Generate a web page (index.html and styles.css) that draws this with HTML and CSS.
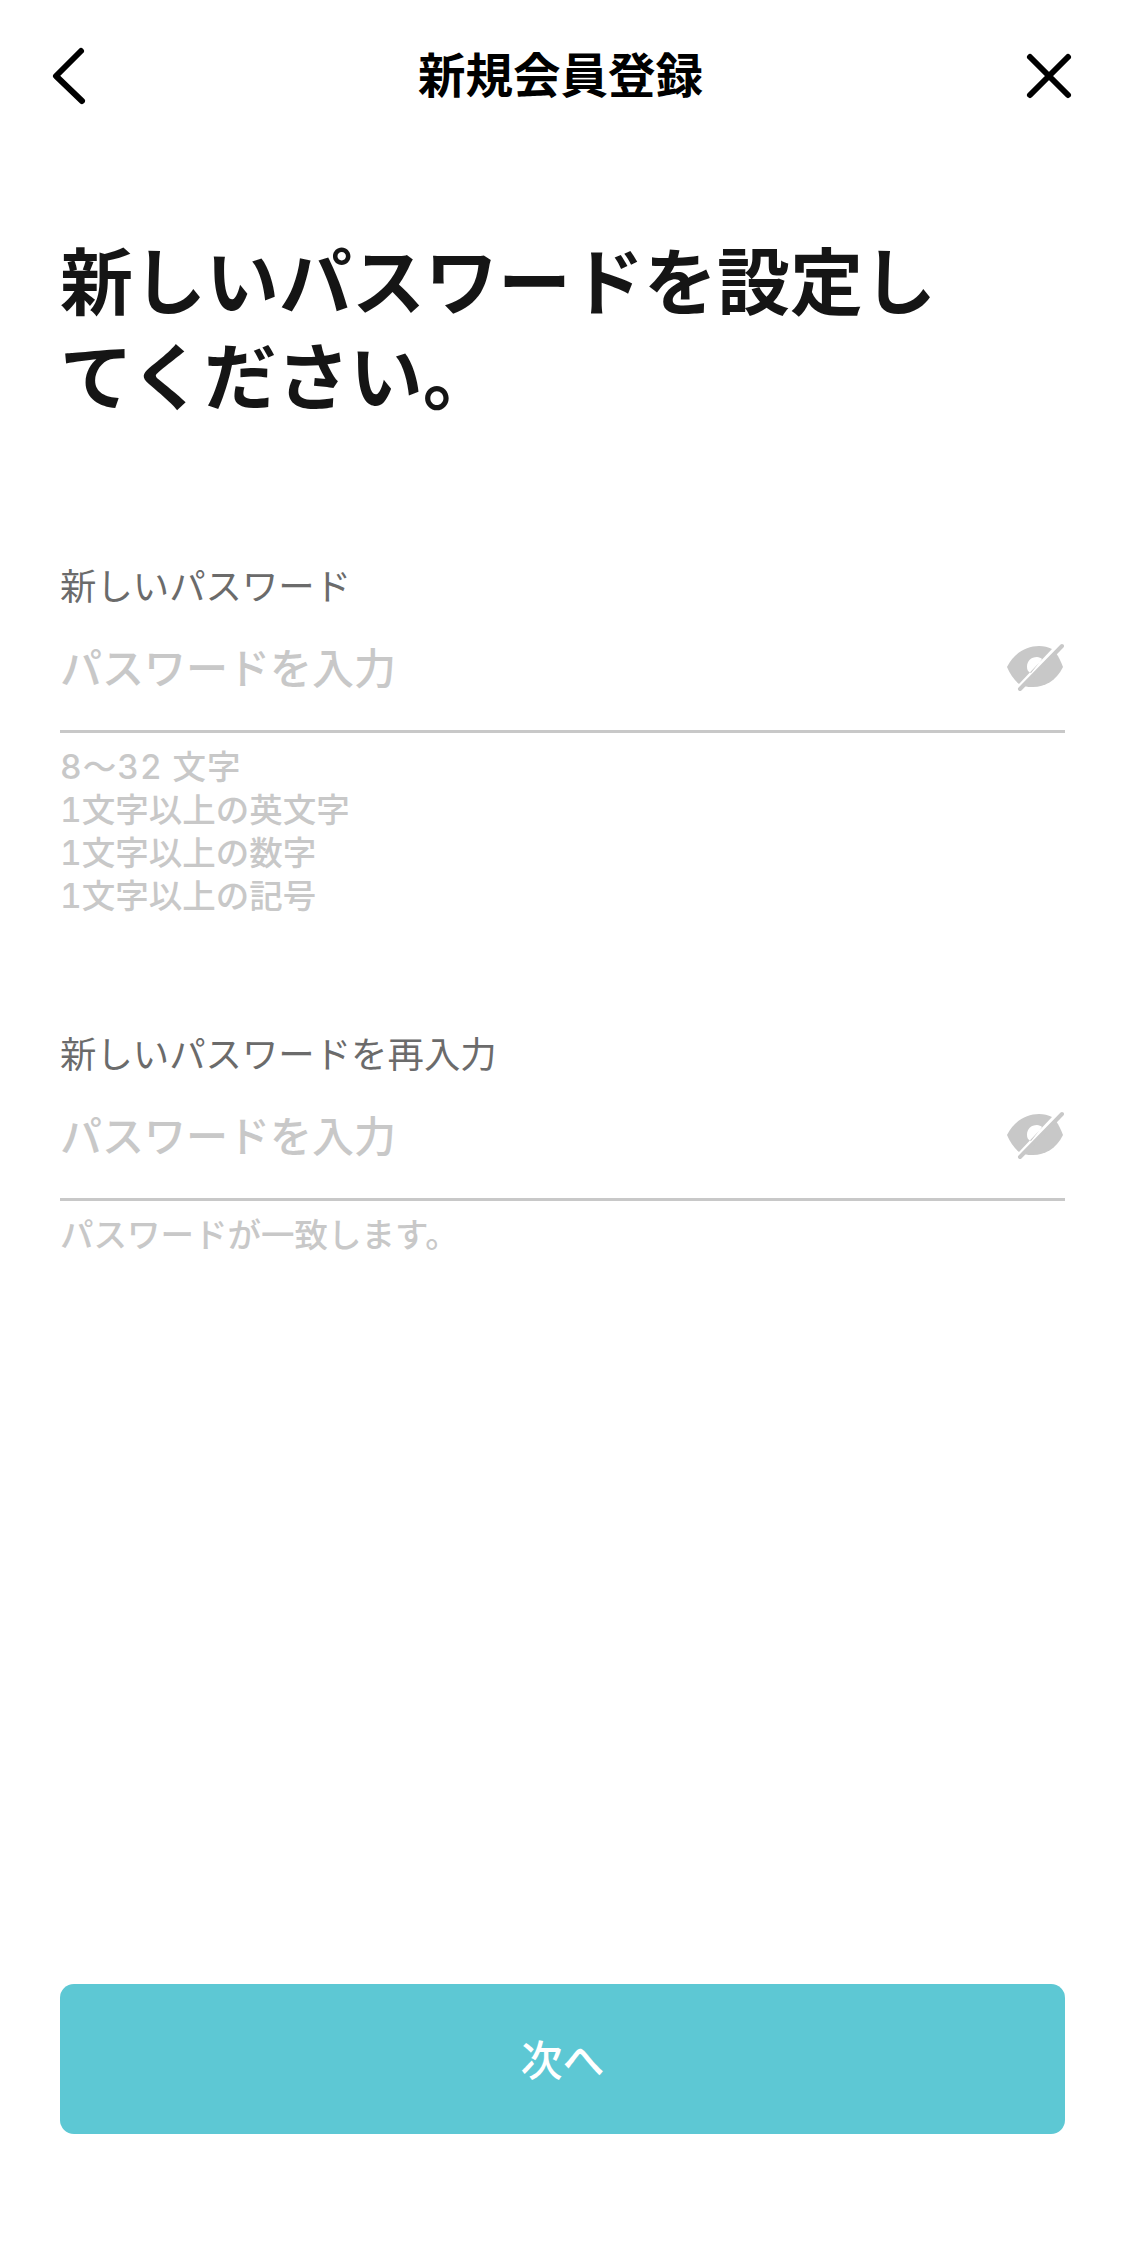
FILE: index.html
```html
<!DOCTYPE html>
<html lang="ja">
<head>
  <meta charset="UTF-8" />
  <title>新規会員登録</title>
  <link rel="stylesheet" href="styles.css">
</head>
<body>
  <div class="page">
    <header class="nav">
      <svg class="nav-icon" width="60" height="76" viewBox="0 0 60 76">
        <path d="M36 5 L11 30 L37 55" fill="none" stroke="#000" stroke-width="6" stroke-linecap="round" stroke-linejoin="round" />
      </svg>
      <div class="nav-title">新規会員登録</div>
      <svg class="nav-icon" width="60" height="76" viewBox="0 0 60 76">
        <path d="M14 11 L52 49 M52 11 L14 49" fill="none" stroke="#000" stroke-width="6" stroke-linecap="round" />
      </svg>
    </header>

    <h1 class="heading">新しいパスワードを設定してください。</h1>

    <div class="field field-first">
      <div class="label">新しいパスワード</div>
      <div class="input">
        <span class="placeholder">パスワードを入力</span>
        <svg class="eye" width="58" height="50" viewBox="0 0 58 50">
          <path d="M1 24 C9 9 21 3 33 3 C38 3 42 4 46 6 L13 41 C8 37 4 31 1 24 Z M21 24 C21 18 25 14 31 14 C33 14 35 15 36 16 L25 30 C22 29 21 27 21 24 Z" fill="#c8c8c8" fill-rule="evenodd" />
          <path d="M50 10 C53 14 55 19 57 24 C50 38 39 44 27 44 C24 44 21 44 18 43 Z" fill="#c8c8c8" />
          <path d="M14 46 L56 3" fill="none" stroke="#c8c8c8" stroke-width="4" stroke-linecap="round" />
        </svg>
      </div>
      <div class="hint">
        <div class="hint-range">8～32 文字</div>
        <div>1文字以上の英文字</div>
        <div>1文字以上の数字</div>
        <div>1文字以上の記号</div>
      </div>
    </div>

    <div class="field field-second">
      <div class="label">新しいパスワードを再入力</div>
      <div class="input">
        <span class="placeholder">パスワードを入力</span>
        <svg class="eye" width="58" height="50" viewBox="0 0 58 50">
          <path d="M1 24 C9 9 21 3 33 3 C38 3 42 4 46 6 L13 41 C8 37 4 31 1 24 Z M21 24 C21 18 25 14 31 14 C33 14 35 15 36 16 L25 30 C22 29 21 27 21 24 Z" fill="#c8c8c8" fill-rule="evenodd" />
          <path d="M50 10 C53 14 55 19 57 24 C50 38 39 44 27 44 C24 44 21 44 18 43 Z" fill="#c8c8c8" />
          <path d="M14 46 L56 3" fill="none" stroke="#c8c8c8" stroke-width="4" stroke-linecap="round" />
        </svg>
      </div>
      <div class="hint">
        <div>パスワードが一致します。</div>
      </div>
    </div>

    <button class="next">次へ</button>
  </div>
</body>
</html>
```

FILE: styles.css
```css
* {
  box-sizing: border-box;
}
body {
  margin: 0;
  background: #fff;
  font-family: "Noto Sans CJK JP", "Noto Sans", sans-serif;
}
.page {
  display: flex;
  flex-direction: column;
  height: 2249px;
  padding: 0 60px 115px;
}
.nav {
  display: flex;
  justify-content: space-between;
  align-items: flex-start;
  height: 152px;
  margin: 0 -11px 0 -15px;
  padding-top: 43px;
}
.nav-icon {
  margin-top: 3px;
}
.nav-title {
  font-size: 47.5px;
  line-height: 60px;
  font-weight: 700;
  color: #000;
}
.heading {
  max-width: 900px;
  margin: 78px 0 0;
  font-size: 73px;
  line-height: 95px;
  font-weight: 700;
  color: #151515;
}
.field-first {
  margin-top: 142px;
}
.field-second {
  margin-top: 112px;
}
.label {
  font-size: 36.4px;
  line-height: 44px;
  color: #6b6b6b;
}
.input {
  display: flex;
  justify-content: space-between;
  align-items: center;
  height: 127px;
  border-bottom: 3px solid #c8c8c8;
  padding-bottom: 4px;
}
.placeholder {
  font-size: 42px;
  font-weight: 500;
  line-height: 60px;
  color: #c8c8c8;
}
.eye {
  display: block;
  margin-top: 4px;
  margin-right: 1px;
}
.hint {
  margin-top: 13px;
  font-family: Inter, "Noto Sans CJK JP", sans-serif;
  font-size: 33.5px;
  font-weight: 500;
  font-variant-numeric: tabular-nums;
  line-height: 43px;
  color: #c8c8c8;
}
.hint-range {
  letter-spacing: 1px;
}
.next {
  display: block;
  width: 100%;
  height: 150px;
  margin-top: auto;
  padding-bottom: 5px;
  background: #5dc8d4;
  color: #fff;
  border: none;
  border-radius: 14px;
  font-family: inherit;
  font-size: 42px;
  font-weight: 500;
}
```
